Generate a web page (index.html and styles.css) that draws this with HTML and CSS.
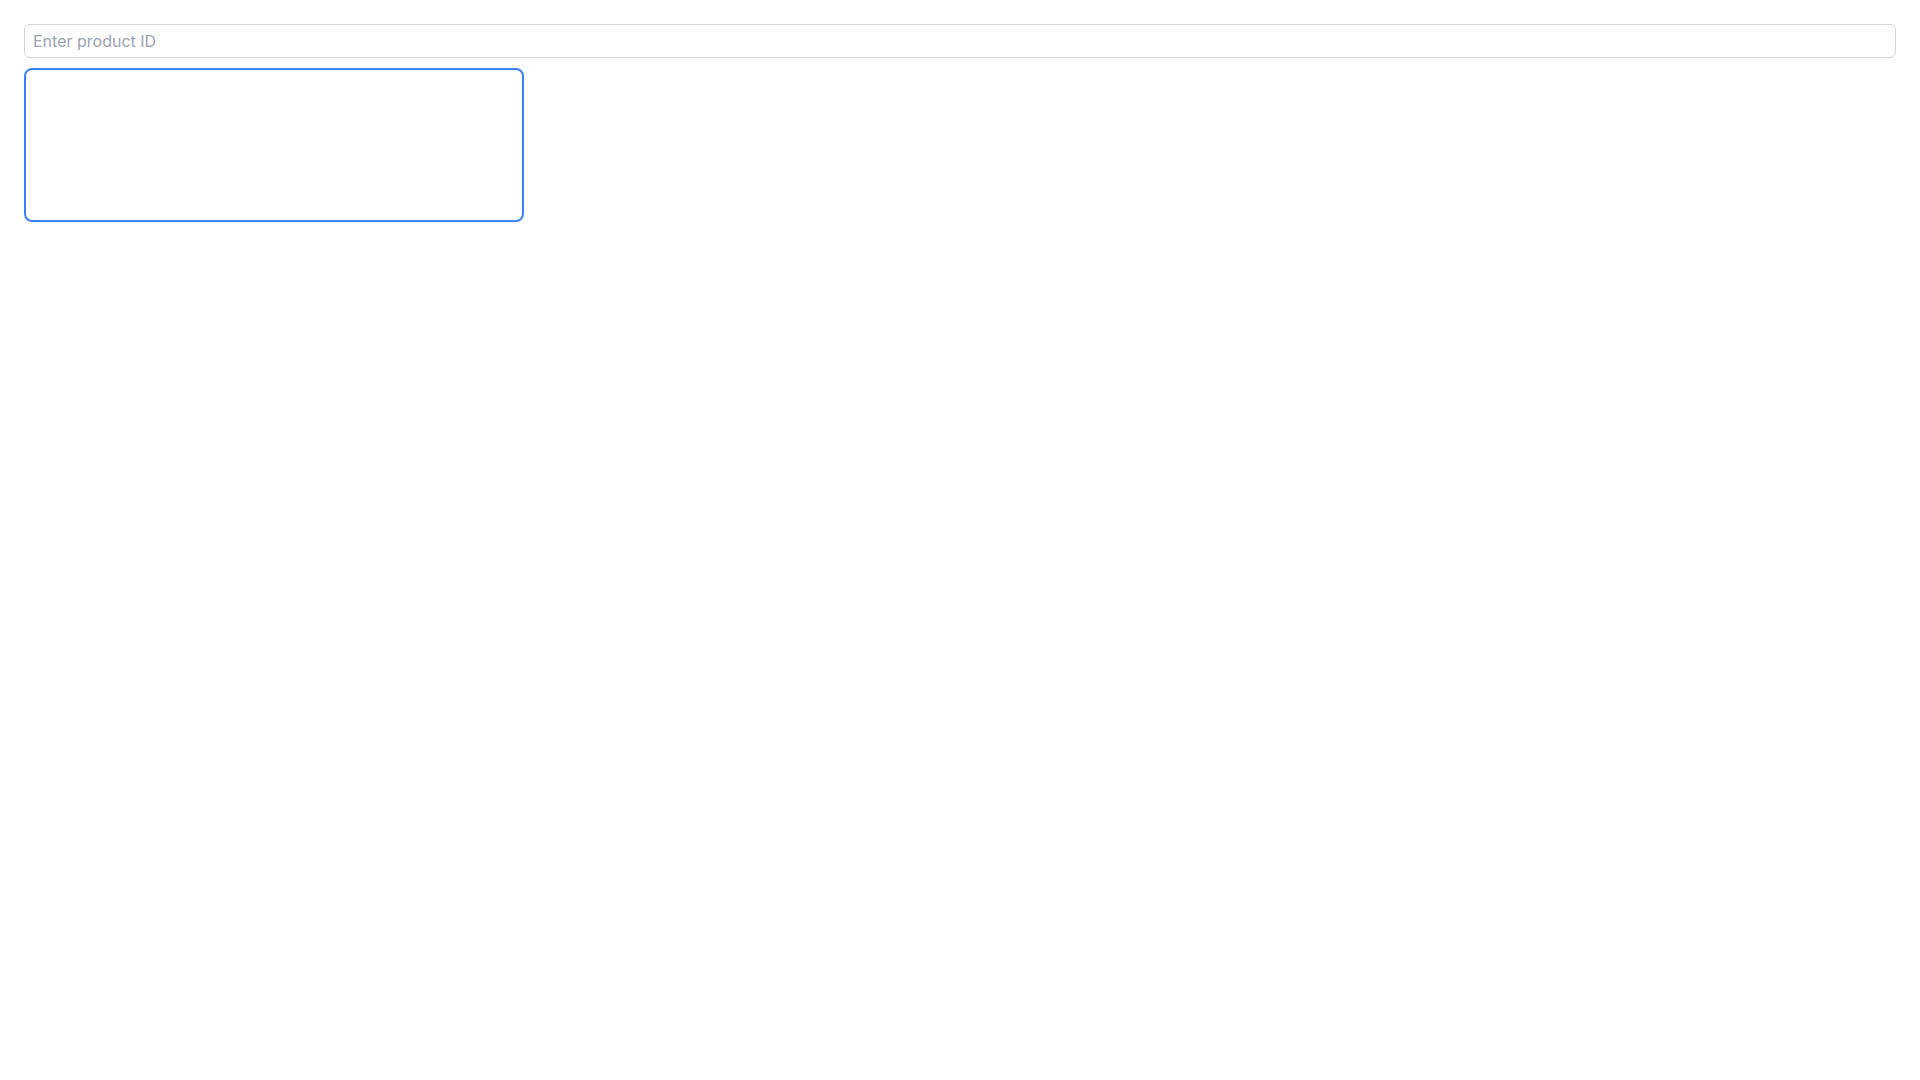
FILE: index.html
```html
<!DOCTYPE html>
<html lang="en">
<head>
    <meta charset="UTF-8">
    <meta name="viewport" content="width=device-width, initial-scale=1.0">
    <title>Product</title>
    <link rel="stylesheet" href="styles.css">
</head>
<body>
  <div class="page">
    <input type="text" class="product-input" placeholder="Enter product ID">
    <div class="product-box"></div>
  </div>
</body>
</html>
```

FILE: styles.css
```css
body,html{
  margin: 0;
  background: #fff;
  font-family: Inter, "Noto Sans", sans-serif;
}
.page{
  padding: 24px;
  display: flex;
  flex-direction: column;
  align-items: flex-start;
  gap: 10px;
}
.product-input{
  box-sizing: border-box;
  width: 100%;
  height: 34px;
  padding: 4px 8px;
  border: 1px solid #d4d4d8;
  border-radius: 6px;
  font-family: inherit;
  font-size: 16px;
  color: #111827;
  outline: none;
}
.product-input::placeholder{
  color: #9ca3af;
}
.product-box{
  box-sizing: border-box;
  width: 500px;
  height: 154px;
  border: 2px solid #3b82f6;
  border-radius: 8px;
}
```
